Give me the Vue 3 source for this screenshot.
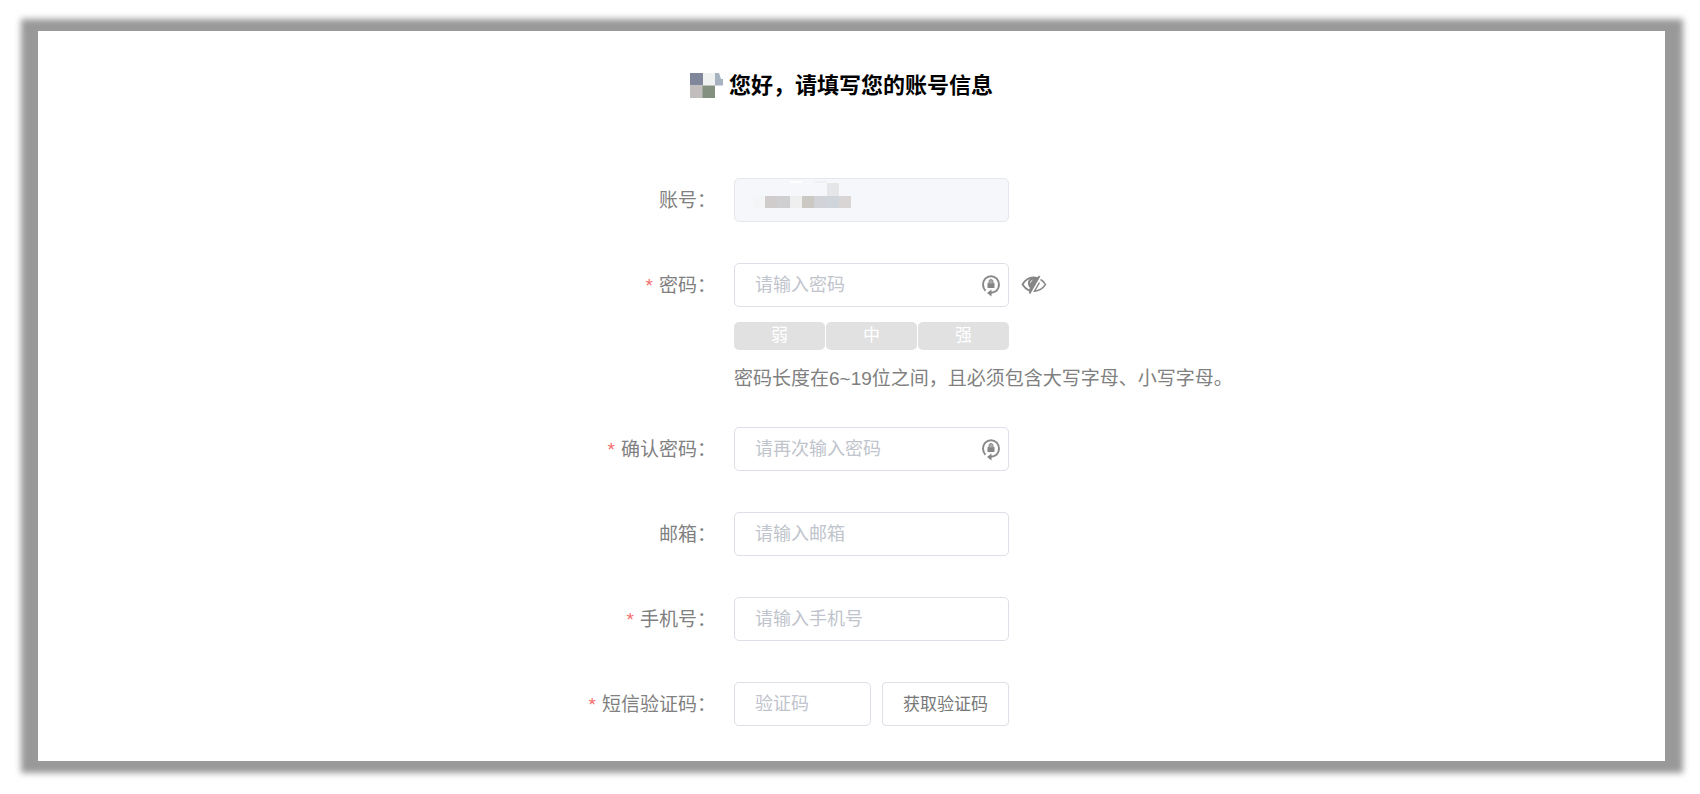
<script setup>
import { reactive, ref } from 'vue'

const form = reactive({ password: '', confirm: '', email: '', phone: '', code: '' })
const visible = ref(false)
const levels = ['弱', '中', '强']
</script>

<template>
  <main class="frame">
    <section class="panel">
      <h1 class="title">
        <svg class="name-mask" viewBox="0 0 33 25" aria-hidden="true">
          <rect width="13" height="12.5" fill="#80879a" />
          <rect x="13" width="12" height="12.5" fill="#eff2f1" />
          <path d="M25 0h4l2 6h2v6.500h-8z" fill="#a6b2bf" />
          <rect y="12.500" width="13" height="12.500" fill="#c1bebd" />
          <rect x="12.500" y="12.500" width="12.500" height="12.500" fill="#84907f" />
        </svg>
        <span>您好，请填写您的账号信息</span>
      </h1>

      <form class="form" @submit.prevent>
        <div class="row">
          <label for="account">账号：</label>
          <div class="content">
            <div class="field">
              <input id="account" type="text" disabled />
              <svg class="account-mask" viewBox="0 0 100 28" aria-hidden="true">
                <rect x="0" y="16" width="12" height="12" fill="#f4f5f6" />
                <rect x="12" y="16" width="13" height="12" fill="#d0cccb" />
                <rect x="24" y="16" width="13" height="12" fill="#cfcfd1" />
                <rect x="37" y="16" width="12" height="12" fill="#efeff0" />
                <rect x="49" y="16" width="12" height="12" fill="#ccc8c3" />
                <rect x="61" y="16" width="13" height="12" fill="#d2d3d8" />
                <rect x="74" y="16" width="12" height="12" fill="#cfd5da" />
                <rect x="86" y="16" width="12" height="12" fill="#d8d5d4" />
                <rect x="74" y="3" width="12" height="13" fill="#e5e6e8" />
                <rect x="37" y="1" width="12" height="2" fill="#fff" />
                <rect x="61" y="1" width="13" height="2" fill="#f0f1f4" />
              </svg>
            </div>
          </div>
        </div>

        <div class="row">
          <label for="password" class="required">密码：</label>
          <div class="content">
            <div class="line">
              <div class="field">
                <input id="password" v-model="form.password" :type="visible ? 'text' : 'password'" placeholder="请输入密码" />
                <svg class="lock" viewBox="0 0 20 24" aria-hidden="true">
                  <path d="M4.500 17.800A8 8.500 0 1 1 15.500 17.800Q13 19.600 10 19.800" fill="none" stroke="#8a8a8a" stroke-width="2" />
                  <path d="M6 20l4.500-3.500v7z" fill="#858585" />
                  <rect x="6.500" y="10" width="7" height="5" rx=".6" fill="#858585" />
                  <path d="M8 10.500V8.500a2 2 0 0 1 4 0v2" fill="#aaa" stroke="#8a8a8a" stroke-width="1" />
                </svg>
              </div>
              <button class="eye" type="button" aria-label="显示密码" @click="visible = !visible">
                <svg viewBox="0 0 26 20" aria-hidden="true">
                  <path d="M17 3.200Q7 0 1.500 9.500Q4 13.500 8 15.500" fill="none" stroke="#858585" stroke-width="1.800" />
                  <path d="M7 9Q6.500 5 10 3L17.500 3L9 17.500l-1.500-2 1.500-2.500Q7 11.500 7 9z" fill="#858585" />
                  <path d="M11.500 5Q9.500 5.500 9.500 8" fill="none" stroke="#ddd" stroke-width="1" />
                  <path d="M18.500 1L8.500 18.500" stroke="#858585" stroke-width="1.800" />
                  <path d="M19.500 4.500Q22.500 6 24.500 9.500Q20.500 15.500 13.500 16.200L18.500 7.500" fill="none" stroke="#8a8a8a" stroke-width="1.500" />
                </svg>
              </button>
            </div>
            <div class="strength">
              <span v-for="level in levels" :key="level">{{ level }}</span>
            </div>
            <p class="hint">密码长度在6~19位之间，且必须包含大写字母、小写字母。</p>
          </div>
        </div>

        <div class="row">
          <label for="confirm" class="required">确认密码：</label>
          <div class="content">
            <div class="field">
              <input id="confirm" v-model="form.confirm" type="password" placeholder="请再次输入密码" />
              <svg class="lock" viewBox="0 0 20 24" aria-hidden="true">
                <path d="M4.500 17.800A8 8.500 0 1 1 15.500 17.800Q13 19.600 10 19.800" fill="none" stroke="#8a8a8a" stroke-width="2" />
                <path d="M6 20l4.500-3.500v7z" fill="#858585" />
                <rect x="6.500" y="10" width="7" height="5" rx=".6" fill="#858585" />
                <path d="M8 10.500V8.500a2 2 0 0 1 4 0v2" fill="#aaa" stroke="#8a8a8a" stroke-width="1" />
              </svg>
            </div>
          </div>
        </div>

        <div class="row">
          <label for="email">邮箱：</label>
          <div class="content">
            <div class="field">
              <input id="email" v-model="form.email" type="text" placeholder="请输入邮箱" />
            </div>
          </div>
        </div>

        <div class="row">
          <label for="phone" class="required">手机号：</label>
          <div class="content">
            <div class="field">
              <input id="phone" v-model="form.phone" type="text" placeholder="请输入手机号" />
            </div>
          </div>
        </div>

        <div class="row">
          <label for="code" class="required">短信验证码：</label>
          <div class="content">
            <div class="field code">
              <input id="code" v-model="form.code" type="text" placeholder="验证码" />
              <button class="send" type="button">获取验证码</button>
            </div>
          </div>
        </div>
      </form>
    </section>
  </main>
</template>

<style>
body {
  background: #fff;
}

#app {
  display: flow-root;
}
</style>

<style scoped>
.frame {
  position: relative;
  z-index: 0;
  margin: 19px 17px 20px 21px;
  padding: 12px 18px 12px 17px;
  font-family: "Liberation Sans", "Noto Sans CJK SC", sans-serif;
  color: #808080;
}

.frame::before {
  content: "";
  position: absolute;
  inset: 0;
  z-index: -1;
  background: #999;
  filter: blur(3px);
}

.panel {
  background: #fff;
  padding: 38px 0 35px;
}

.title {
  display: flex;
  justify-content: center;
  align-items: center;
  gap: 6px;
  margin: 0 20px 76px 0;
  font-size: 22px;
  line-height: 33px;
  font-weight: 700;
  color: #000;
}

.name-mask {
  width: 33px;
  height: 25px;
}

.form {
  display: grid;
  gap: 41px;
  width: 775px;
  max-width: 100%;
  margin: 0 auto;
}

.row {
  display: grid;
  grid-template-columns: 252px 1fr;
  column-gap: 18px;
}

label {
  height: 44px;
  text-align: right;
  font-size: 19px;
  line-height: 46px;
}

.required::before {
  content: "*";
  margin-right: 6px;
  color: #f56c6c;
}

.line {
  display: flex;
  align-items: center;
  gap: 12px;
}

.field {
  position: relative;
  width: 275px;
}

input {
  display: block;
  box-sizing: border-box;
  width: 100%;
  min-width: 0;
  height: 44px;
  padding: 0 20px;
  border: 1px solid #dcdfe6;
  border-radius: 5px;
  background: #fff;
  font: inherit;
  font-size: 18px;
  color: #606266;
  outline: none;
}

input::placeholder {
  color: #c0c4cc;
  opacity: 1;
}

input:focus {
  border-color: #409eff;
}

input:disabled {
  background: #f5f7fa;
  border-color: #e4e7ed;
}

.account-mask {
  position: absolute;
  left: 19px;
  top: 2px;
  width: 100px;
  height: 28px;
}

.lock {
  position: absolute;
  right: 8px;
  top: 10px;
  width: 20px;
  height: 24px;
}

.eye {
  padding: 0;
  border: 0;
  background: none;
  cursor: pointer;
}

.eye svg {
  display: block;
  width: 26px;
  height: 20px;
}

.strength {
  display: grid;
  grid-template-columns: repeat(3, 1fr);
  gap: 1px;
  width: 275px;
  margin-top: 15px;
}

.strength span {
  border-radius: 5px;
  background: #e1e1e1;
  color: #fff;
  font-size: 17px;
  line-height: 28px;
  text-align: center;
}

.hint {
  margin: 15px 0 -7px;
  font-size: 19px;
  line-height: 28px;
}

.code {
  display: grid;
  grid-template-columns: 137px 1fr;
  gap: 11px;
}

.send {
  padding: 0 0 3px;
  border: 1px solid #dcdfe6;
  border-radius: 4px;
  background: #fff;
  font: inherit;
  font-size: 17px;
  color: #787878;
  cursor: pointer;
}
</style>
